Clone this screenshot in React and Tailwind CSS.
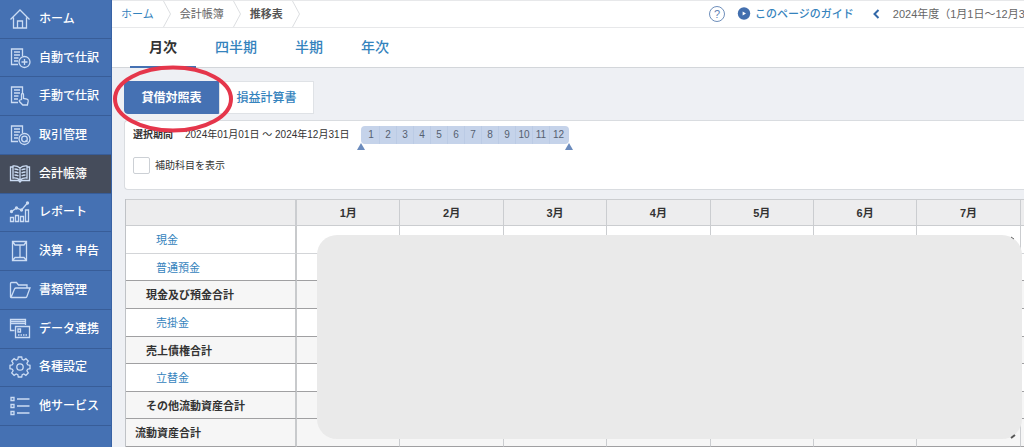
import clsx from 'clsx'
import React, { useState } from 'react'

const Icon = ({ children }) => (
  <svg viewBox="0 0 22 22" className="w-[22px] h-[22px] shrink-0" fill="none" stroke="currentColor" strokeWidth="1.3" aria-hidden="true">
    {children}
  </svg>
)

const Sheet = () => (
  <>
    <path d="M9 17.5H2.500V2h11v7" />
    <path d="M5 5h6M5 8h6M5 11h4.500M5 14h4" />
  </>
)

const icons = {
  home: <path d="M1.5 11.5 11 2l9.500 9.500M4.500 9.500V20h13V9.500M8.500 20v-7h5v7" />,
  auto: (
    <>
      <Sheet />
      <circle cx="15.5" cy="15" r="5.5" />
      <path d="M15.5 12v6M12.5 15h6" />
    </>
  ),
  manual: (
    <>
      <Sheet />
      <path d="M12.500 14.500V9.500q0-1 1-1t1 1v4l3.500.7q1.500.4 1.200 2l-.8 3.800h-4.600l-3.300-3.500q-.6-1 .4-1.500z" />
    </>
  ),
  manage: (
    <>
      <Sheet />
      <circle cx="15.5" cy="15" r="5.5" />
      <circle cx="15.5" cy="15" r="2.8" />
      <path d="M16.500 16.500l2 1.500" />
    </>
  ),
  book: (
    <>
      <path d="M4 4H1.5v13.500h8L11 19l1.500-1.500h8V4H18M11 5v12M11 5Q8 2.500 4 3v12q4-.5 7 2 3-2.500 7-2V3q-4-.5-7 2z" />
      <path d="M5.500 6q2.500 0 4 1M5.500 9q2.500 0 4 1M5.500 12q2.500 0 4 1M16.500 6q-2.500 0-4 1M16.500 9q-2.500 0-4 1M16.500 12q-2.500 0-4 1" />
    </>
  ),
  chart: (
    <>
      <path d="M1.5 20.500v-4h3v4zM6.500 20.500v-6h3v6zM11.500 20.500v-5h3v5zM16.500 20.500V9h3v11.500z" />
      <path d="M2.500 10.500l5-3.500 5 2 6-7" />
      <g fill="currentColor">
        <circle cx="2.5" cy="10.5" r="1" />
        <circle cx="7.5" cy="7" r="1" />
        <circle cx="12.5" cy="9" r="1" />
        <circle cx="18.5" cy="2" r="1" />
      </g>
    </>
  ),
  closing: <path d="M3.500 1.500h14v19h-14zM3.500 1.500l2.500 3.500h9l2.500-3.500M11 5v12M3.500 20.500L6 17.500h9l2.500 3" />,
  folder: <path d="M1.5 18V4.500q0-1 1-1h5l2 2.500H18v3M1.500 18q0 .5.5.5h14.500q1 0 1.300-.8L21 9H7Q6 9 5.500 10L2 18.500" />,
  data: (
    <>
      <path d="M5.500 12.500h-4V1.500h15V7M1.500 3.500h15M1.500 5.500h15" />
      <path d="M6.500 8.500h14v11h-14zM9 11h2.500v3H9z" />
      <path d="M9 17h9.500" strokeDasharray="1.5 1" />
    </>
  ),
  gear: (
    <>
      <path d="M9.300 1h3.400l.5 2.400 1.600.7 2.100-1.400 2.400 2.400-1.400 2.100.7 1.600 2.400.5v3.400l-2.400.5-.7 1.600 1.400 2.100-2.400 2.400-2.100-1.400-1.600.7-.5 2.400H9.300l-.5-2.400-1.600-.7-2.100 1.400-2.400-2.400 1.400-2.100-.7-1.600-2.400-.5V9.300l2.400-.5.7-1.600-1.400-2.100 2.400-2.400 2.100 1.400 1.600-.7z" />
      <circle cx="11" cy="11" r="3.2" />
    </>
  ),
  list: <path d="M2 2.500h3v3H2zM2 9.500h3v3H2zM2 16.500h3v3H2zM8 4h12.500M8 11h12.500M8 18h12.500" />,
}

const navItems = [
  { label: 'ホーム', icon: 'home' },
  { label: '自動で仕訳', icon: 'auto' },
  { label: '手動で仕訳', icon: 'manual' },
  { label: '取引管理', icon: 'manage' },
  { label: '会計帳簿', icon: 'book', active: true },
  { label: 'レポート', icon: 'chart' },
  { label: '決算・申告', icon: 'closing' },
  { label: '書類管理', icon: 'folder' },
  { label: 'データ連携', icon: 'data' },
  { label: '各種設定', icon: 'gear' },
  { label: '他サービス', icon: 'list' },
]

const periods = ['月次', '四半期', '半期', '年次']
const reports = ['貸借対照表', '損益計算書']
const months = [1, 2, 3, 4, 5, 6, 7, 8, 9, 10, 11, 12]
const columns = months.slice(0, 8)

const accounts = [
  { name: '現金', level: 2 },
  { name: '普通預金', level: 2 },
  { name: '現金及び預金合計', level: 1 },
  { name: '売掛金', level: 2 },
  { name: '売上債権合計', level: 1 },
  { name: '立替金', level: 2 },
  { name: 'その他流動資産合計', level: 1 },
  { name: '流動資産合計', level: 0 },
]

const indent = ['pl-[9px]', 'pl-5', 'pl-[30px]']

const Sidebar = () => (
  <nav className="w-28 shrink-0 bg-[#4571b3] border-r border-[#3862a5]">
    <ul className="grid auto-rows-fr h-[426px]">
      {navItems.map(({ label, icon, active }) => (
        <li key={label} className={clsx('border-b border-[#385d98]', active && 'bg-[#454c5b]')}>
          <a href="#" className="h-full flex items-center gap-2 pl-[9px] text-xs font-medium text-white whitespace-nowrap">
            <span className="text-[#cbdcf4]">
              <Icon>{icons[icon]}</Icon>
            </span>
            {label}
          </a>
        </li>
      ))}
    </ul>
  </nav>
)

const CrumbArrow = () => (
  <svg viewBox="0 0 8 26" className="w-2 h-[26px]" fill="none" stroke="#dcdee1" aria-hidden="true">
    <path d="M.5 0l7 13-7 13" />
  </svg>
)

const TopBar = () => (
  <header className="flex items-center h-7 border-y border-[#e7e8ea] bg-white pl-[9px] text-[11px] whitespace-nowrap">
    <div className="flex items-center gap-[9px] text-[#666]">
      <a href="#" className="text-[#3583bd]">ホーム</a>
      <CrumbArrow />
      <span>会計帳簿</span>
      <CrumbArrow />
      <span className="font-bold text-[#555]">推移表</span>
      <CrumbArrow />
    </div>
    <div className="ml-auto w-[315px] shrink-0 flex items-center overflow-hidden">
      <button type="button" aria-label="ヘルプ" className="w-4 h-4 shrink-0 rounded-full border border-[#6f8fbb] text-[#5f82b3] text-[11px] leading-none">
        ?
      </button>
      <a href="#" className="ml-3 flex items-center gap-1 font-medium text-[#3583bd]">
        <svg viewBox="0 0 14 14" className="w-[14px] h-[14px]" aria-hidden="true">
          <circle cx="7" cy="6.5" r="6.2" fill="#436fae" />
          <path d="M5.600 4.500l3.400 2-3.400 2z" fill="#fff" />
        </svg>
        このページのガイド
      </a>
      <button type="button" aria-label="前年度" className="ml-[18px] mr-[13px]">
        <svg viewBox="0 0 8 10" className="w-2 h-[10px]" fill="none" stroke="#3268a8" strokeWidth="2" aria-hidden="true">
          <path d="M6.500 1l-4 4 4 4" />
        </svg>
      </button>
      <span className="text-[#666]">2024年度（1月1日〜12月31日）</span>
    </div>
  </header>
)

const PeriodTabs = () => {
  const [period, setPeriod] = useState('月次')
  return (
    <div className="flex h-10 border-b border-[#d3d6da] bg-white pl-[18px]">
      {periods.map((p) => (
        <button
          key={p}
          type="button"
          onClick={() => setPeriod(p)}
          className={clsx(
            '-mb-px px-[19px] text-sm border-b-2',
            p === period ? 'font-bold text-[#333] border-[#4571b3]' : 'font-medium text-[#3583bd] border-transparent'
          )}
        >
          {p}
        </button>
      ))}
    </div>
  )
}

const ReportSwitch = () => {
  const [report, setReport] = useState('貸借対照表')
  return (
    <div className="relative flex w-fit">
      {reports.map((r) => (
        <button
          key={r}
          type="button"
          onClick={() => setReport(r)}
          className={clsx(
            'w-[95px] h-[33px] text-xs border first:rounded-l last:rounded-r',
            r === report ? 'bg-[#4571b3] border-[#4571b3] text-white font-bold' : 'bg-white border-[#dfe2e6] text-[#3583bd] font-medium'
          )}
        >
          {r}
        </button>
      ))}
      <svg viewBox="0 0 122 68" className="absolute -left-3 -top-4 w-[122px] h-[68px] z-10 pointer-events-none" aria-hidden="true">
        <ellipse cx="61" cy="34" rx="58" ry="31.5" fill="none" stroke="#e5364b" strokeWidth="4" />
      </svg>
    </div>
  )
}

const Handle = () => (
  <svg viewBox="0 0 8 7" className="w-2 h-[7px]" fill="#6b8bbd" aria-hidden="true">
    <path d="M4 0l4 7H0z" />
  </svg>
)

const FilterPanel = () => (
  <section className="h-[70px] bg-white border border-r-0 border-[#d9dce0] rounded-l pl-2 pt-[5px] text-[10px] text-[#333] whitespace-nowrap">
    <div className="flex items-start">
      <h2 className="font-bold leading-[18px] w-[52px]">選択期間</h2>
      <span className="leading-[18px] w-[172px]">2024年01月01日 〜 2024年12月31日</span>
      <div className="relative ml-1">
        <ol className="flex h-[18px] rounded-sm bg-[#c5d3ea] text-[#555f70] px-[2px]">
          {months.map((m) => (
            <li key={m} className="w-[17px] leading-[18px] text-center border-r border-[#bbcbe5] last:border-r-0">{m}</li>
          ))}
        </ol>
        <div className="absolute -left-1 -right-1 top-[17px] flex justify-between">
          <Handle />
          <Handle />
        </div>
      </div>
    </div>
    <label className="mt-[13px] flex items-center gap-[5px] w-fit">
      <input type="checkbox" className="appearance-none w-[17px] h-[17px] border border-[#ccd0d5] rounded-xs bg-white checked:bg-[#4571b3]" />
      補助科目を表示
    </label>
  </section>
)

const BalanceTable = () => (
  <div className="relative overflow-hidden">
    <table className="table-fixed w-[999px] h-[248px] border-separate border-spacing-0 border-l border-[#bfc2c6] bg-white text-[11px] text-[#333]">
      <colgroup>
        <col className="w-[171px]" />
        {columns.map((m) => (
          <col key={m} />
        ))}
      </colgroup>
      <thead>
        <tr className="h-[27px] bg-[#ededee]">
          <th scope="col" aria-label="勘定科目" className="border-y border-r-2 border-[#cbcdd0]" />
          {columns.map((m) => (
            <th key={m} scope="col" className="px-0 pt-[2px] pb-0 border-y border-r border-[#cbcdd0] font-bold">{m}月</th>
          ))}
        </tr>
      </thead>
      <tbody>
        {accounts.map(({ name, level }, i) => {
          const total = level < 2
          const dark = total || accounts[i + 1]?.level < 2
          const line = dark ? 'border-b-[#a0a0a2]' : 'border-b-[#d3d5d8]'
          return (
            <tr key={name} className={total ? 'bg-[#f6f6f6]' : 'bg-white'}>
              <th
                scope="row"
                className={clsx('pt-[2px] pb-0 pr-0 text-left border-b border-r-2 border-r-[#c8cacc] whitespace-nowrap', indent[level], line, total ? 'font-bold' : 'font-normal')}
              >
                {total ? name : <a href="#" className="text-[#3583bd]">{name}</a>}
              </th>
              {columns.map((m) => (
                <td key={m} className={clsx('p-0 border-b border-r border-r-[#cbcdd0]', line)} />
              ))}
            </tr>
          )
        })}
      </tbody>
    </table>
    {/* cover that hides the amounts */}
    <div className="absolute left-48 right-[2px] top-9 bottom-2 rounded-[20px] bg-[#eaeaea]">
      <svg viewBox="0 0 10 6" className="absolute right-1 bottom-0 w-[10px] h-[6px]" stroke="#555" strokeWidth="2" aria-hidden="true">
        <path d="M3 5l4-3" />
      </svg>
      <svg viewBox="0 0 10 6" className="absolute right-1 top-0 w-[10px] h-[6px]" stroke="#666" aria-hidden="true">
        <path d="M3 2l3 2" />
      </svg>
    </div>
  </div>
)

const App = () => (
  <div
    lang="ja"
    className="flex h-screen overflow-hidden bg-[#eef0f4] font-['Liberation_Sans','Noto_Sans_CJK_JP',sans-serif]"
  >
    <Sidebar />
    <div className="flex-1 min-w-0">
      <TopBar />
      <PeriodTabs />
      <main className="pl-3 pt-[13px]">
        <ReportSwitch />
        <div className="mt-[6px]">
          <FilterPanel />
        </div>
        <div className="mt-[9px] pl-px">
          <BalanceTable />
        </div>
      </main>
    </div>
  </div>
)

export default App
